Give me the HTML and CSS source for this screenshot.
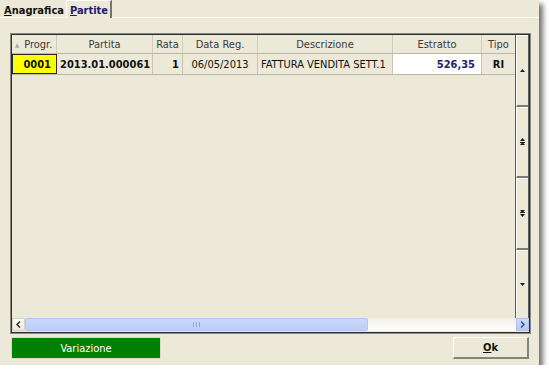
FILE: index.html
```html
<!DOCTYPE html>
<html>
<head>
<meta charset="utf-8">
<link rel="stylesheet" href="styles.css">
</head>
<body>
<div class="window">
  <div class="tabs">
    <div class="tab"><span class="u">A</span>nagrafica</div>
    <div class="tab active"><span class="u">P</span>artite</div>
    <div class="tab-rest"></div>
  </div>
  <div class="panel">
    <div class="grid">
      <div class="grid-inner">
        <div class="grid-main">
          <div class="table">
            <div class="row header">
              <div class="cell c1"><span class="sort">▲</span><span class="hl">Progr.</span></div>
              <div class="cell c2 center">Partita</div>
              <div class="cell c3 center">Rata</div>
              <div class="cell c4 center">Data Reg.</div>
              <div class="cell c5 center">Descrizione</div>
              <div class="cell c6 center">Estratto</div>
              <div class="cell c7 center">Tipo</div>
            </div>
            <div class="row data">
              <div class="cell c1 focus right b">0001</div>
              <div class="cell c2 b">2013.01.000061</div>
              <div class="cell c3 right b">1</div>
              <div class="cell c4 center">06/05/2013</div>
              <div class="cell c5">FATTURA VENDITA SETT.1</div>
              <div class="cell c6 right b amount">526,35</div>
              <div class="cell c7 center b">RI</div>
            </div>
          </div>
          <div class="vscroll">
            <div class="seg"><svg width="5" height="3" viewBox="0 0 5 3"><path d="M2.5 0 L5 3 L0 3 Z" fill="#1b1b1b"/></svg></div>
            <div class="seg"><svg width="5" height="7" viewBox="0 0 5 7"><path d="M2.5 0 L5 3 L0 3 Z M0 4 H5 V5 H0 Z M2.5 4 L5 7 L0 7 Z" fill="#1b1b1b"/></svg></div>
            <div class="seg"><svg width="5" height="7" viewBox="0 0 5 7"><path d="M0 0 L5 0 L2.5 3 Z M0 2 H5 V3 H0 Z M0 4 L5 4 L2.5 7 Z" fill="#1b1b1b"/></svg></div>
            <div class="seg"><svg width="5" height="3" viewBox="0 0 5 3"><path d="M0 0 L5 0 L2.5 3 Z" fill="#1b1b1b"/></svg></div>
          </div>
        </div>
        <div class="hscroll">
          <div class="hbtn left"><svg width="5" height="7" viewBox="0 0 5 7"><path d="M4 0.5 L1 3.5 L4 6.5" fill="none" stroke="#222" stroke-width="1.4"/></svg></div>
          <div class="thumb"><svg width="7" height="5" viewBox="0 0 7 5"><path d="M0.5 0 V5 M3.5 0 V5 M6.5 0 V5" stroke="#8fa6dc" stroke-width="1"/></svg></div>
          <div class="track"></div>
          <div class="hbtn right"><svg width="5" height="7" viewBox="0 0 5 7"><path d="M1 0.5 L4 3.5 L1 6.5" fill="none" stroke="#3a4a78" stroke-width="1.4"/></svg></div>
        </div>
      </div>
    </div>
    <div class="buttons">
      <div class="btn green">Variazione</div>
      <div class="btn ok"><span class="u">O</span>k</div>
    </div>
  </div>
</div>
</body>
</html>
```

FILE: styles.css
```css
* { box-sizing: border-box; }
body {
  margin: 0;
  background: #fff;
  font-family: "DejaVu Sans Condensed", "DejaVu Sans", sans-serif;
  font-stretch: condensed;
  font-size: 11px;
  color: #111;
}
.window {
  width: 539px;
  height: 365px;
  background: #ece9d8;
  box-shadow: 4px 4px 5px rgba(0,0,0,0.55);
  display: flex;
  flex-direction: column;
}
.tabs {
  height: 18px;
  display: flex;
  align-items: stretch;
}
.tab {
  font-weight: bold;
  padding: 5px 1px 0 4px;
  border-bottom: 1px solid #fff;
  line-height: 12px;
}
.tab.active {
  color: #1e1d6c;
  margin-left: 1px;
  padding: 4px 2px 0 3px;
  border-left: 1px solid #fff;
  border-top: 1px solid #fff;
  border-right: 2px solid #77756a;
  border-bottom: none;
}
.tab-rest { flex: 1; border-bottom: 1px solid #fff; }
.u { text-decoration: underline; }

.panel {
  flex: 1;
  padding: 15px 0 0 10px;
  display: flex;
  flex-direction: column;
}
.grid {
  width: 521px;
  height: 301px;
  border: 1px solid #8a8a86;
}
.grid-inner {
  height: 100%;
  border: 1px solid #2e2e2e;
  display: flex;
  flex-direction: column;
}
.grid-main {
  height: 284px;
  display: flex;
}
.table {
  width: 503px;
}
.row { display: flex; }
.row.header {
  height: 19px;
  border-bottom: 1px solid #b9b6a6;
  color: #3a3a3a;
}
.row.data {
  height: 21px;
  border-bottom: 1px solid #b9b6a6;
}
.cell {
  display: flex;
  align-items: center;
  padding: 0 3px;
  border-right: 1px solid #c7c4b4;
  white-space: nowrap;
  overflow: hidden;
}
.header .cell { border-right: 1px solid #cfccbc; }
.center { justify-content: center; }
.right { justify-content: flex-end; }
.b { font-weight: bold; }
.c1 { width: 45px; }
.c2 { width: 96px; }
.c3 { width: 30px; }
.c4 { width: 75px; }
.c5 { width: 135px; }
.c6 { width: 89px; }
.c7 { width: 33px; border-right: none; }
.header .c7 { border-right: none; }
.sort { font-size: 6px; color: #a8a8a8; margin-right: 5px; margin-left: 0; }
.focus {
  background: #ffff00;
  border: 1px solid #2a2a2a;
  padding-right: 5px;
}
.amount {
  background: #fff;
  color: #21216b;
  padding-right: 6px;
}
.vscroll {
  width: 14px;
  display: flex;
  flex-direction: column;
  border-left: 1px solid #5c5c5c;
  border-right: 1px solid #5c5c5c;
  margin-left: 0;
}
.seg {
  flex: 1;
  display: flex;
  align-items: center;
  justify-content: center;
  border-top: 1px solid #fff;
  border-left: 1px solid #fff;
  border-bottom: 2px solid #7a7a7a;
}
.seg:last-child { border-bottom: none; }
.hscroll {
  height: 13px;
  display: flex;
  margin-top: -1px;
}
.hbtn {
  width: 13px;
  display: flex;
  align-items: center;
  justify-content: center;
}
.hbtn.left {
  background: linear-gradient(#fbfbf9, #e9e8e0);
  border: 1px solid #d6d4c8;
}
.hbtn.right {
  background: linear-gradient(#cdd9fb, #b7c9f5);
  border: 1px solid #b2c3ee;
}
.thumb {
  width: 343px;
  background: linear-gradient(#cad8fd, #bccff8);
  border: 1px solid #b4c6f1;
  border-radius: 2px;
  display: flex;
  align-items: center;
  justify-content: center;
}
.track {
  flex: 1;
  background: linear-gradient(#f1f0ea, #fefefe);
}
.buttons {
  margin-top: 3px;
  width: 519px;
  display: flex;
  justify-content: space-between;
  padding-left: 1px;
}
.btn {
  height: 22px;
  display: flex;
  align-items: center;
  justify-content: center;
}
.btn.green {
  width: 150px;
  background: #008000;
  color: #fff;
  border: 1px solid #dcdacb;
}
.btn.ok {
  width: 76px;
  font-weight: bold;
  border-top: 1px solid #fff;
  border-left: 1px solid #fff;
  border-right: 2px solid #85837a;
  border-bottom: 2px solid #85837a;
}
```
